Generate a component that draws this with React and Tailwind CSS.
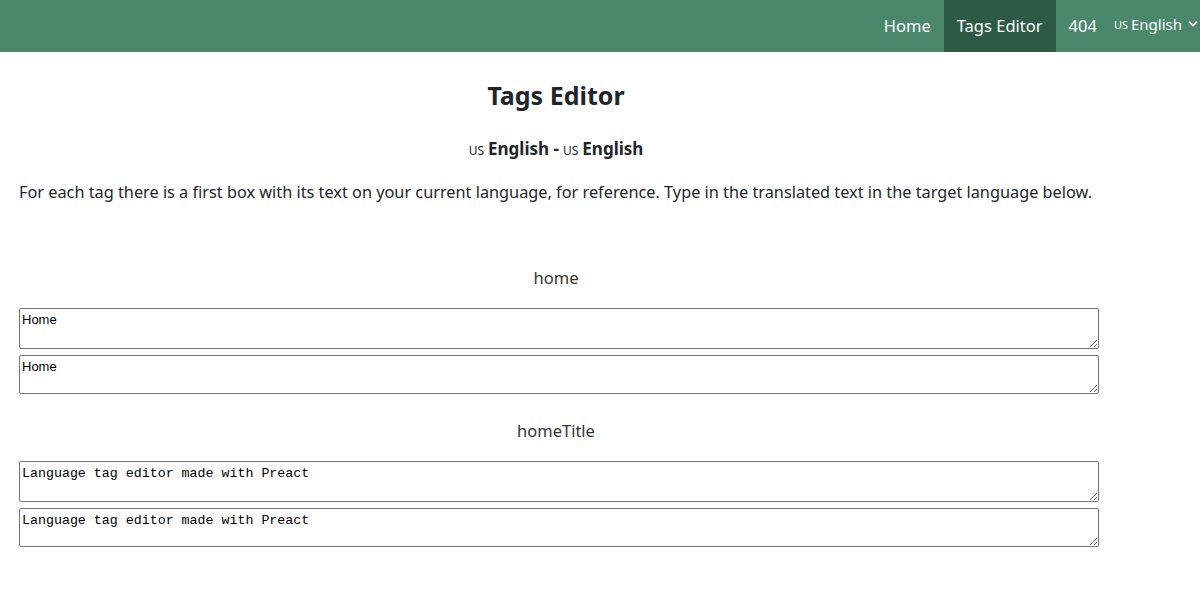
import React from "react";

const sans = { fontFamily: '"Noto Sans", "Open Sans", sans-serif' };

function Chevron() {
  return (
    <svg width="10" height="10" viewBox="0 0 10 10" className="ml-[6px]">
      <path d="M1.5 3.2 L5 6.7 L8.5 3.2" fill="none" stroke="white" strokeWidth="1.8" strokeLinecap="round" strokeLinejoin="round" />
    </svg>
  );
}

function Tag({ name, value, mono }) {
  const font = mono
    ? "font-['Liberation_Mono',monospace] text-[13.3px] pt-[4px]"
    : "font-['Liberation_Sans',Arial,sans-serif] text-[13px] pt-[3px]";
  return (
    <div className="flex flex-col">
      <div className="w-[1112px] text-center text-[16.5px] text-[#333] leading-[24px] mb-[18px]">{name}</div>
      <div className="pl-[19px] flex flex-col gap-[6px]">
        <textarea
          defaultValue={value}
          className={`w-[1080px] h-[41px] border border-[#767676] rounded-[2px] px-[2px] text-black leading-[16px] ${font}`}
        />
        <textarea
          defaultValue={value}
          className={`w-[1080px] h-[39px] border border-[#767676] rounded-[2px] px-[2px] text-black leading-[16px] ${font}`}
        />
      </div>
    </div>
  );
}

export default function App() {
  return (
    <div className="w-[1200px] min-h-[600px] bg-white" style={sans}>
      <nav className="h-[52px] bg-[#4a876b] flex justify-end text-white text-[16.5px]">
        <a className="px-[13px] flex items-center">Home</a>
        <a className="px-[13px] flex items-center bg-[#2d5a45]">Tags Editor</a>
        <a className="px-[13px] flex items-center">404</a>
        <div className="pl-[4px] pr-[2px] flex items-center text-[15px] -mt-[4px]">
          <span className="text-[11px] mr-[3px] mt-[2px]">US</span>
          <span>English</span>
          <Chevron />
        </div>
      </nav>
      <div className="w-[1112px] text-center mt-[26px]">
        <h1 className="text-[25px] font-bold text-[#212529] leading-[34px]">Tags Editor</h1>
        <div className="mt-[25px] text-[17px] text-[#212529] leading-[24px]">
          <span className="text-[12px] mr-[4px]">US</span>
          <b>English -</b>
          <span className="text-[12px] mx-[4px]">US</span>
          <b>English</b>
        </div>
      </div>
      <p className="pl-[19px] mt-[19px] text-[16.3px] text-[#212529] leading-[21px] whitespace-nowrap">
        For each tag there is a first box with its text on your current language, for reference. Type in the translated text in the target language below.
      </p>
      <div className="mt-[63px] flex flex-col gap-[25px]">
        <Tag name="home" value="Home" />
        <Tag name="homeTitle" value="Language tag editor made with Preact" mono />
      </div>
    </div>
  );
}
